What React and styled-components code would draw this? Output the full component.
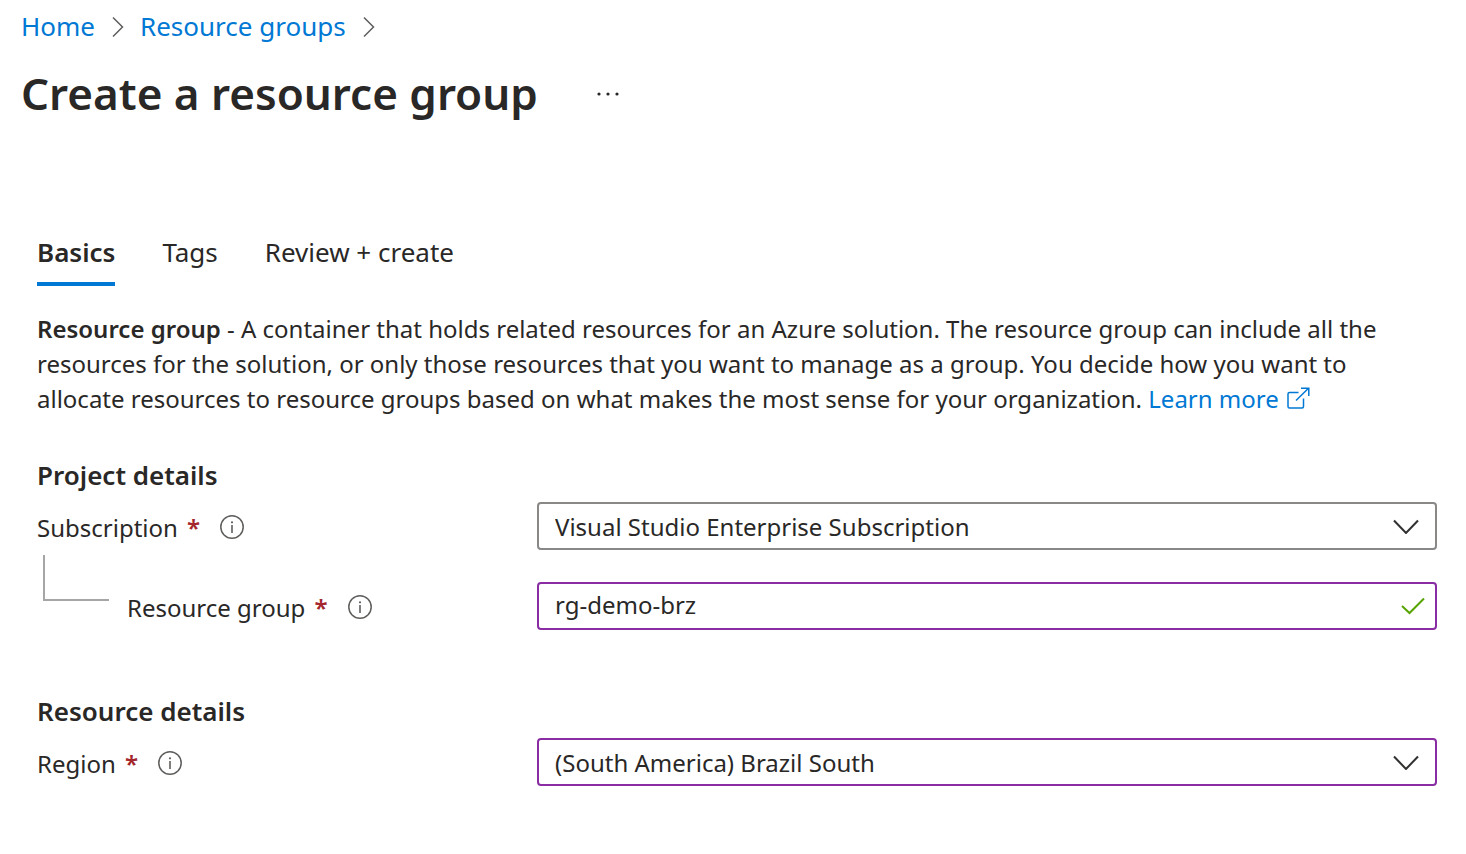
import React from "react";
import styled, { createGlobalStyle, css } from "styled-components";

const Global = createGlobalStyle`
  * { box-sizing: border-box; }
  body {
    margin: 0;
    background: #fff;
    color: #292827;
    font-family: "Noto Sans", "Open Sans", sans-serif;
    font-size: 26px;
  }
  svg { display: block; flex: none; fill: none; }
`;

const Page = styled.main`
  padding: 6px 29px 48px 21px;
`;

const Crumbs = styled.ol`
  display: flex;
  align-items: center;
  gap: 16px;
  height: 40px;
  margin: 0;
  padding: 0;
  list-style: none;
`;

const Crumb = styled.li`
  display: flex;
  align-items: center;
  gap: 17px;
`;

const Link = styled.a`
  color: #0078d4;
  text-decoration: none;
`;

const TitleRow = styled.header`
  display: flex;
  align-items: center;
  gap: 58px;
  height: 94px;
`;

const Title = styled.h1`
  margin: 0;
  font-size: 44px;
  font-weight: 600;
  line-height: 60px;
`;

const IconButton = styled.button`
  display: flex;
  padding: 0;
  border: 0;
  background: none;
  color: ${(p) => p.$color || "inherit"};
`;

const Content = styled.div`
  padding: 82px 0 0 16px;
`;

const Tabs = styled.div`
  display: flex;
  gap: 47px;
`;

const Tab = styled.button`
  height: 64px;
  padding: 0;
  border: 0;
  border-bottom: 4px solid ${(p) => (p.$active ? "#0078d4" : "transparent")};
  background: none;
  color: inherit;
  font: inherit;
  font-weight: ${(p) => (p.$active ? 600 : 400)};
`;

const Intro = styled.p`
  margin: 25px 0 0;
  font-size: 24px;
  line-height: 35px;
`;

const Strong = styled.strong`
  font-weight: 600;
`;

const LearnMore = styled(Link)`
  display: inline-flex;
  align-items: center;
  gap: 8px;
  vertical-align: top;
`;

const Section = styled.section`
  display: flex;
  flex-direction: column;
  gap: 32px;
  margin-top: ${(p) => p.$space}px;
`;

const Heading = styled.h2`
  margin: 0 0 -23px;
  font-size: 26px;
  font-weight: 600;
  line-height: 36px;
`;

const Row = styled.div`
  display: flex;
  align-items: center;
  height: 48px;
`;

const LabelCell = styled.div`
  display: flex;
  align-items: center;
  gap: 20px;
  flex: none;
  width: 500px;
  padding-top: 2px;
  font-size: 24px;
`;

const Branch = styled.span`
  align-self: flex-start;
  width: 66px;
  height: 46px;
  margin: -36px -2px 0 6px;
  border: solid #a6a6a6;
  border-width: 0 0 2px 2px;
`;

const Required = styled.span`
  margin-left: 3px;
  color: #a4262c;
  font-weight: 600;
`;

const Field = styled.div`
  position: relative;
  flex: 1;
`;

const control = css`
  display: block;
  width: 100%;
  height: 48px;
  padding: 0 56px 0 16px;
  border: 2px solid ${(p) => (p.$edited ? "#8a2da5" : "#8a8886")};
  border-radius: 4px;
  outline: none;
  appearance: none;
  background: #fff;
  color: inherit;
  font: inherit;
  font-size: 24px;
`;

const Select = styled.select`
  ${control}
`;

const Input = styled.input`
  ${control}
  padding-bottom: 3px;
`;

const Adornment = styled.span`
  position: absolute;
  top: 0;
  right: ${(p) => p.$right}px;
  display: flex;
  align-items: center;
  height: 100%;
  pointer-events: none;
`;

const Separator = () => (
  <svg width="12" height="24" viewBox="0 0 12 24" stroke="#605e5c" strokeWidth="1.5" aria-hidden="true">
    <path d="M1 3.5 L10.5 13 L1 22.5" />
  </svg>
);

const Dots = () => (
  <svg width="24" height="8" viewBox="0 0 24 8" aria-hidden="true">
    <g fill="currentColor">
      <circle cx="3" cy="5" r="1.6" />
      <circle cx="12" cy="5" r="1.6" />
      <circle cx="21" cy="5" r="1.6" />
    </g>
  </svg>
);

const External = () => (
  <svg width="23" height="23" viewBox="0 0 23 23" stroke="currentColor" strokeWidth="1.5" aria-hidden="true">
    <path d="M11.5 5.500 H2.500 Q1 5.500 1 7 V19.500 Q1 21 2.500 21 H15 Q16.500 21 16.500 19.500 V11.500" />
    <path d="M9 13.500 L21.500 1.200 M14 1.200 H21.800 V9" />
  </svg>
);

const Info = ({ subject }) => (
  <IconButton type="button" $color="#605e5c" aria-label={`About ${subject}`}>
    <svg width="24" height="24" viewBox="0 0 24 24" aria-hidden="true">
      <circle cx="12" cy="12" r="11.2" stroke="currentColor" strokeWidth="1.5" />
      <path d="M12 10 V18" stroke="currentColor" strokeWidth="1.6" />
      <circle cx="12" cy="7.300" r="1.100" fill="currentColor" />
    </svg>
  </IconButton>
);

const Chevron = () => (
  <Adornment $right={18}>
    <svg width="26" height="16" viewBox="0 0 26 16" stroke="#323130" strokeWidth="2" aria-hidden="true">
      <path d="M1 2.500 L13 15 L25 2.500" />
    </svg>
  </Adornment>
);

const Check = () => (
  <Adornment $right={12}>
    <svg width="24" height="18" viewBox="0 0 24 18" stroke="#57a300" strokeWidth="2" aria-hidden="true">
      <path d="M1 9 L8.500 16 L23 1.500" />
    </svg>
  </Adornment>
);

const FormRow = ({ id, label, nested, children }) => (
  <Row>
    <LabelCell>
      {nested && <Branch />}
      <label htmlFor={id}>
        {label} <Required>*</Required>
      </label>
      <Info subject={label} />
    </LabelCell>
    <Field>{children}</Field>
  </Row>
);

export default function App() {
  return (
    <Page>
      <Global />
      <nav aria-label="Breadcrumb">
        <Crumbs>
          <Crumb><Link href="#home">Home</Link><Separator /></Crumb>
          <Crumb><Link href="#groups">Resource groups</Link><Separator /></Crumb>
        </Crumbs>
      </nav>
      <TitleRow>
        <Title>Create a resource group</Title>
        <IconButton type="button" aria-label="More actions"><Dots /></IconButton>
      </TitleRow>
      <Content>
        <Tabs role="tablist">
          <Tab role="tab" aria-selected="true" $active>Basics</Tab>
          <Tab role="tab" aria-selected="false">Tags</Tab>
          <Tab role="tab" aria-selected="false">Review + create</Tab>
        </Tabs>
        <Intro>
          <Strong>Resource group</Strong> - A container that holds related resources for an Azure
          solution. The resource group can include all the resources for the solution, or only those
          resources that you want to manage as a group. You decide how you want to allocate resources
          to resource groups based on what makes the most sense for your organization.{" "}
          <LearnMore href="#learn">Learn more<External /></LearnMore>
        </Intro>
        <Section $space={41}>
          <Heading>Project details</Heading>
          <FormRow id="subscription" label="Subscription">
            <Select id="subscription">
              <option>Visual Studio Enterprise Subscription</option>
            </Select>
            <Chevron />
          </FormRow>
          <FormRow id="group" label="Resource group" nested>
            <Input id="group" type="text" defaultValue="rg-demo-brz" $edited />
            <Check />
          </FormRow>
        </Section>
        <Section $space={63}>
          <Heading>Resource details</Heading>
          <FormRow id="region" label="Region">
            <Select id="region" $edited>
              <option>(South America) Brazil South</option>
            </Select>
            <Chevron />
          </FormRow>
        </Section>
      </Content>
    </Page>
  );
}
